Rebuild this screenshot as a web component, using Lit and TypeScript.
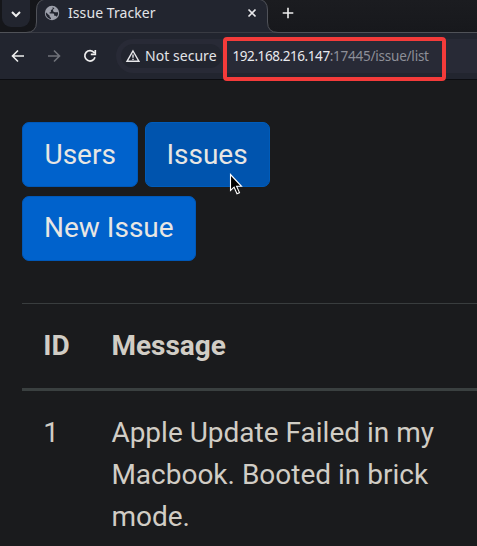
import { LitElement, html, css } from "lit";
import { customElement } from "lit/decorators.js";

@customElement("browser-chrome")
class BrowserChrome extends LitElement {
  static styles = css`
    :host { display: block; height: 80px; background: #22252f; color: #e3e4e8;
      font: 14px "Noto Sans", sans-serif; position: relative; }
    * { box-sizing: border-box; }
    svg { display: block; flex: none; }
    .strip { height: 33px; display: flex; position: relative; background: linear-gradient(#1b1c20, #17181c); }
    .outline { position: absolute; left: 0; top: 0; }
    .left { width: 37px; padding-left: 2px; position: relative; }
    .search { width: 28px; height: 27px; border-radius: 0 0 9px 9px; background: #22252f;
      display: flex; align-items: center; justify-content: center; }
    .tab { width: 230px; height: 33px; padding: 0 9px 7px 7px; display: flex; align-items: center; position: relative; }
    .title { margin-left: 8px; padding-bottom: 2px; flex: 1; white-space: nowrap; letter-spacing: 0.08px; }
    .right { flex: 1; padding: 6px 0 0 14px; position: relative; }
    .bar { height: 47px; border-bottom: 1px solid #0c0d11; display: flex; padding: 6px 0 7px 10px; }
    .nav { display: flex; align-items: center; gap: 20px; width: 106px; }
    .address { flex: 1; height: 34px; border-radius: 17px 0 0 17px; background: #282a36;
      display: flex; align-items: center; padding-left: 5px; }
    .chip { height: 24px; width: 101px; border-radius: 12px; background: #22252f; display: flex;
      align-items: center; padding-left: 4px; white-space: nowrap; letter-spacing: 0.04px; }
    .chip span { margin-left: 5px; padding-bottom: 2px; }
    .url { margin-left: 10.5px; padding-bottom: 1px; color: #e8e9ed; white-space: nowrap;
      font-size: 13.5px; letter-spacing: -0.42px; }
    .path { color: #8d8f98; letter-spacing: -0.23px; }
    .mark { position: absolute; left: 223px; top: 37px; width: 223px; height: 44px;
      border: 4px solid #f43b3a; border-radius: 4px; z-index: 2; }
  `;
  render() {
    return html`
      <div class="strip">
        <svg class="outline" width="477" height="33" viewBox="0 0 477 33">
          <path d="M0 0H46Q36.500 2 36.500 10V22Q36.500 32.500 26 32.500H0z" fill="#15161a"/>
          <path d="M0 33V32.500H26Q36.500 32.500 36.500 22V10Q36.500 0 46 -1H258Q267.500 0 267.500 10V22Q267.500 32.500 278 32.500H477V33z" fill="#22252f" stroke="#505259"/>
        </svg>
        <div class="left"><div class="search">
          <svg width="12" height="12" viewBox="0 0 12 12" fill="none" stroke="#eee" stroke-width="2"><path d="M2 4l4 4 4-4"/></svg>
        </div></div>
        <div class="tab">
          <svg width="16" height="16" viewBox="0 0 16 16"><circle cx="8" cy="8" r="7.2" fill="#9da0ab"/>
            <path d="M8.700 1.900v1.400c0 1-.8 1.700-1.800 1.700v1.400c0 .6-.6.8-1.300.8v1.300h3.200c.8 0 1.400.5 1.400 1.300v1h1c.7 0 1.200.4 1.400 1 1-1 1.500-2.200 1.500-3.500l-.1-1H11c-1.200 0-2-.9-2-2 0-.8.6-1.400 1.500-1.800zM1.900 7.200l3.800 3.500v.8c0 .7.6 1.200 1.300 1.200v1.400C3.600 13.400 1.400 10.400 1.900 7.200z" fill="#22252f"/></svg>
          <span class="title">Issue Tracker</span>
          <svg width="12" height="12" viewBox="0 0 12 12" stroke="#e8e8eb" stroke-width="1.7"><path d="M2.500 2.500l7 7M9.500 2.500l-7 7"/></svg>
        </div>
        <div class="right">
          <svg width="14" height="14" viewBox="0 0 14 14" stroke="#eee" stroke-width="1.600"><path d="M7 1.700v10.600M1.700 7h10.600"/></svg>
        </div>
      </div>
      <div class="bar">
        <div class="nav">
          <svg width="16" height="16" viewBox="0 0 16 16" fill="none" stroke="#eee" stroke-width="1.600"><path d="M14 8H3M8 2.500L2.500 8 8 13.500"/></svg>
          <svg width="16" height="16" viewBox="0 0 16 16" fill="none" stroke="#70727a" stroke-width="1.600"><path d="M2 8h11M8 2.500L13.500 8 8 13.500"/></svg>
          <svg width="16" height="16" viewBox="0 0 16 16" fill="none" stroke="#eee" stroke-width="1.700"><path d="M12.200 4.700A5.200 5.200 0 1 0 13 9.300M13.300 2v4.300H8.800"/></svg>
        </div>
        <div class="address">
          <div class="chip">
            <svg width="15" height="14" viewBox="0 0 15 14" fill="none" stroke="#e8e8eb" stroke-width="1.400"><path d="M8 2L14 12.300H2zM8 5.500v3.300M8 9.800v1.300"/></svg>
            <span>Not secure</span>
          </div>
          <div class="url">192.168.216.147<span class="path">:17445/issue/list</span></div>
        </div>
      </div>
      <div class="mark"></div>
    `;
  }
}

@customElement("app-root")
class AppRoot extends LitElement {
  static styles = css`
    :host { display: block; width: 477px; height: 546px; overflow: hidden; position: relative;
      background: #1a1b1d; color: #d1cdc5; font: 28px/42px Roboto, sans-serif; }
    * { box-sizing: border-box; }
    .actions { display: flex; flex-wrap: wrap; gap: 9px 7px; padding: 42px 22px 0; width: 300px; }
    .btn { height: 65px; padding: 10px 21.500px; border: 1px solid #0058b8; border-radius: 7px;
      background: #0062cc; color: #e8e6e3; font: inherit; line-height: 42px; white-space: nowrap; }
    .hover { background: #0054ae; border-color: #005cba; padding: 10px 21.500px 10px 20px; }
    .create { padding: 9px 21px 11px; }
    .table { margin: 42px 0 0 22px; border-top: 1px solid #393d3e; }
    .row { display: grid; grid-template-columns: 68.200px 334px; padding: 21px 0 21px 21.200px; width: 455px; }
    .head { font-weight: 700; border-bottom: 3px solid #3a4040; height: 87px; }
    .pointer { position: absolute; left: 229px; top: 173px; }
  `;
  render() {
    return html`
      <browser-chrome></browser-chrome>
      <div class="actions">
        <button class="btn">Users</button>
        <button class="btn hover">Issues</button>
        <button class="btn create">New Issue</button>
      </div>
      <div class="table">
        <div class="row head"><div>ID</div><div>Message</div></div>
        <div class="row"><div>1</div><div>Apple Update Failed in my Macbook. Booted in brick mode.</div></div>
      </div>
      <svg class="pointer" width="14" height="23" viewBox="0 0 14 23"><path d="M1.500 1.500v16l3.600-3.300 2.900 6.500 2.500-1.100-2.900-6.300h4.900z" fill="#000" stroke="#fff" stroke-width="1.100"/></svg>
    `;
  }
}
